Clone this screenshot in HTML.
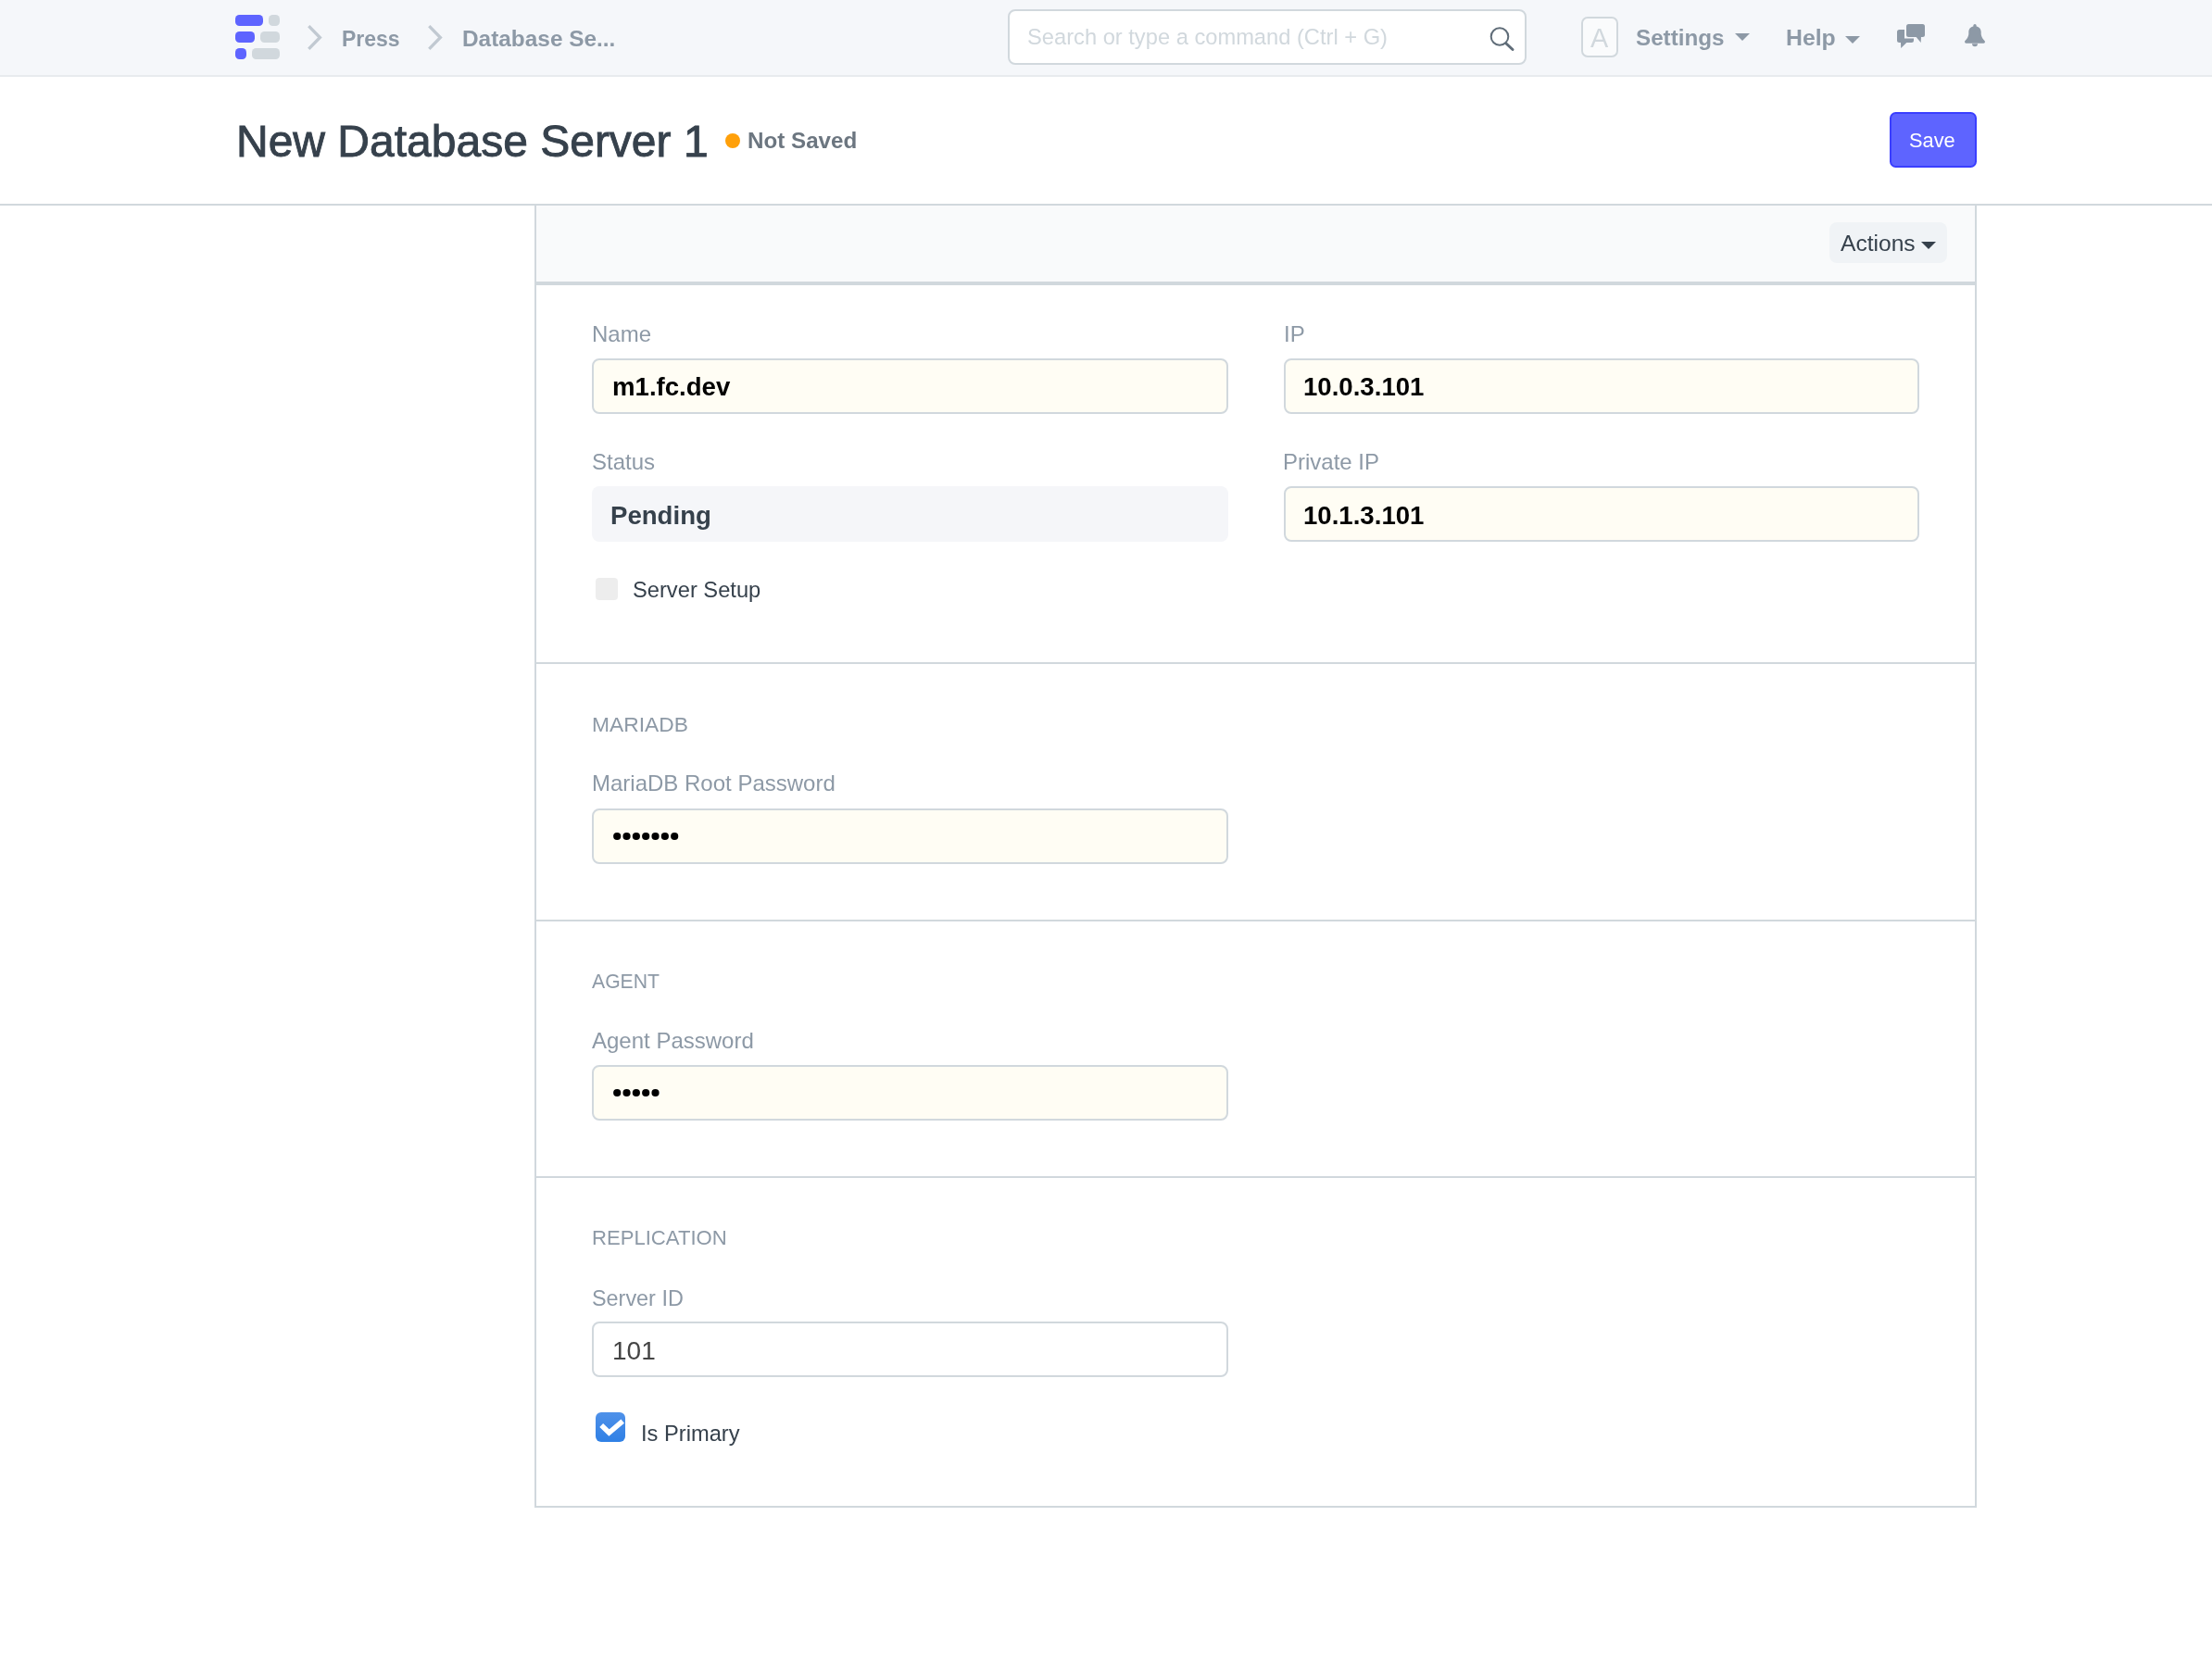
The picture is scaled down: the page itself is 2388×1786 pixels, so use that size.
<!DOCTYPE html>
<html><head><meta charset="utf-8">
<style>
html,body{margin:0;padding:0;}
body{width:2388px;height:1786px;overflow:hidden;position:relative;background:#fff;font-family:"Liberation Sans",sans-serif;}
.a{position:absolute;}
.t{position:absolute;white-space:nowrap;line-height:1;will-change:transform;}
.nav{left:0;top:0;width:2388px;height:81px;background:#f5f7fa;border-bottom:2px solid #e8ebee;}
.lg{position:absolute;height:12px;border-radius:4.5px;}
.pu{background:#5e64ff;}
.gr{background:#d1d8dd;}
.crumb{font-weight:700;color:#8d99a6;font-size:24px;}
.inp{position:absolute;box-sizing:border-box;height:60px;border:2px solid #d1d8dd;border-radius:8px;background:#fffdf4;}
.lbl{color:#8d99a6;font-size:24px;}
.val{color:#000;font-weight:700;font-size:27.6px;}
.sec{color:#8d99a6;font-size:22.8px;}
.hr{position:absolute;left:579px;width:1553px;height:2px;background:#d1d8dd;}
</style></head>
<body>
<!-- NAVBAR -->
<div class="a nav"></div>
<div class="lg pu" style="left:254px;top:16px;width:30px"></div>
<div class="lg gr" style="left:290px;top:16px;width:12px"></div>
<div class="lg pu" style="left:254px;top:34px;width:21px"></div>
<div class="lg gr" style="left:281px;top:34px;width:21px"></div>
<div class="lg pu" style="left:254px;top:52px;width:12px"></div>
<div class="lg gr" style="left:272px;top:52px;width:30px"></div>
<svg class="a" style="left:328px;top:24px" width="24" height="34" viewBox="0 0 24 34"><polyline points="5.3,4.1 17.4,16.5 5.3,28.9" fill="none" stroke="#c1c9d1" stroke-width="3.3"/></svg>
<div class="t crumb" style="left:369px;top:30.5px;font-size:23px">Press</div>
<svg class="a" style="left:457.6px;top:24px" width="24" height="34" viewBox="0 0 24 34"><polyline points="5.3,4.1 17.4,16.5 5.3,28.9" fill="none" stroke="#c1c9d1" stroke-width="3.3"/></svg>
<div class="t crumb" style="left:499px;top:30px;font-size:24.4px">Database Se...</div>

<div class="a" style="left:1088px;top:10px;width:560px;height:60px;box-sizing:border-box;border:2px solid #d1d8dd;border-radius:8px;background:#fff"></div>
<div class="t" style="left:1109px;top:29px;font-size:23.7px;color:#d1d8dd">Search or type a command (Ctrl + G)</div>
<svg class="a" style="left:1600px;top:22px" width="44" height="40" viewBox="0 0 44 40"><circle cx="19" cy="17.5" r="9.3" fill="none" stroke="#5f6c78" stroke-width="2"/><line x1="26" y1="25" x2="33" y2="31.5" stroke="#5f6c78" stroke-width="3" stroke-linecap="round"/></svg>

<div class="a" style="left:1707px;top:18px;width:40px;height:44px;box-sizing:border-box;border:2px solid #d1d8dd;border-radius:7px;background:#fafbfc"></div>
<div class="t" style="left:1717.3px;top:26.8px;font-size:28.8px;color:#d1d8dd">A</div>
<div class="t crumb" style="left:1766px;top:29px;font-size:24.2px">Settings</div>
<svg class="a" style="left:1873px;top:36px" width="16" height="8" viewBox="0 0 16 8"><polygon points="0,0 16,0 8,8" fill="#8d99a6"/></svg>
<div class="t crumb" style="left:1928px;top:29px;font-size:24.8px">Help</div>
<svg class="a" style="left:1992px;top:39px" width="16" height="8" viewBox="0 0 16 8"><polygon points="0,0 16,0 8,8" fill="#8d99a6"/></svg>
<svg class="a" style="left:2040px;top:15px" width="50" height="45" viewBox="0 0 50 45"><path d="M10.5,17 L16,17 L16,26.6 L26,26.6 L26,28.5 Q26,31 23.5,31 L18.3,31 L12.2,37 L12,31 L10.5,31 Q8,31 8,28.5 L8,19.5 Q8,17 10.5,17 Z" fill="#8d99a6"/><rect x="18" y="11" width="20" height="14" rx="2.5" fill="#8d99a6"/><polygon points="27.8,24 34,24 33.7,31" fill="#8d99a6"/></svg>
<svg class="a" style="left:2110px;top:15px" width="45" height="45" viewBox="0 0 45 45"><circle cx="22" cy="12.8" r="1.7" fill="#8d99a6"/><path d="M11,30 C11,29 14.5,27 15.3,22 L15.3,19.5 C15.3,15.5 18.3,13.2 22,13.2 C25.7,13.2 28.7,15.5 28.7,19.5 L28.7,22 C29.5,27 33,29 33,30 Q33,31.7 31.5,31.7 L12.5,31.7 Q11,31.7 11,30 Z" fill="#8d99a6"/><path d="M19,32.3 A3,3 0 0 0 25,32.3 Z" fill="#8d99a6"/></svg>

<!-- PAGE HEAD -->
<div class="t" style="left:254.5px;top:129px;font-size:48px;color:#36414c;-webkit-text-stroke:0.9px #36414c">New Database Server 1</div>
<div class="a" style="left:783px;top:144px;width:16px;height:16px;border-radius:50%;background:#ffa00a"></div>
<div class="t" style="left:807px;top:140px;font-size:24.2px;font-weight:700;color:#6c7680">Not Saved</div>
<div class="a" style="left:2040px;top:121px;width:94px;height:60px;box-sizing:border-box;border:2px solid #3a3eff;border-radius:6.5px;background:#5e64ff"></div>
<div class="t" style="left:2061px;top:141px;font-size:21.8px;color:#fff">Save</div>
<div class="a" style="left:0;top:220px;width:2388px;height:2px;background:#d1d8dd"></div>

<!-- CARD -->
<div class="a" style="left:577px;top:222px;width:1557px;height:1406px;box-sizing:border-box;border:2px solid #d1d8dd;border-top:0;background:#fff"></div>
<div class="a" style="left:579px;top:222px;width:1553px;height:82px;background:#f9fafb;border-bottom:4px solid #d1d8dd"></div>
<div class="a" style="left:1975px;top:240px;width:127px;height:44px;border-radius:8px;background:#f0f3f6"></div>
<div class="t" style="left:1987px;top:251px;font-size:24.6px;color:#36414c">Actions</div>
<svg class="a" style="left:2074px;top:261px" width="16" height="8" viewBox="0 0 16 8"><polygon points="0,0 16,0 8,8" fill="#36414c"/></svg>


<!-- FORM: section 1 -->
<div class="t lbl" style="left:639px;top:348.7px">Name</div>
<div class="inp" style="left:639px;top:387px;width:687px"></div>
<div class="t val" style="left:661px;top:403.6px">m1.fc.dev</div>
<div class="t lbl" style="left:1386px;top:348.7px">IP</div>
<div class="inp" style="left:1386px;top:387px;width:686px"></div>
<div class="t val" style="left:1407px;top:403.6px">10.0.3.101</div>

<div class="t lbl" style="left:639px;top:486.7px">Status</div>
<div class="a" style="left:639px;top:525px;width:687px;height:60px;border-radius:8px;background:#f5f6f9"></div>
<div class="t val" style="left:659px;top:542.6px;color:#36414c">Pending</div>
<div class="t lbl" style="left:1385px;top:486.7px">Private IP</div>
<div class="inp" style="left:1386px;top:525px;width:686px"></div>
<div class="t val" style="left:1407px;top:542.6px">10.1.3.101</div>

<div class="a" style="left:643px;top:624px;width:24px;height:24px;border-radius:4px;background:#ededed"></div>
<div class="t" style="left:683px;top:625.9px;font-size:23.7px;color:#36414c">Server Setup</div>

<div class="hr" style="top:715px"></div>
<div class="t sec" style="left:639px;top:770.7px">MARIADB</div>
<div class="t lbl" style="left:639px;top:834px">MariaDB Root Password</div>
<div class="inp" style="left:639px;top:873px;width:687px"></div>
<svg class="a" style="left:662px;top:898px" width="74" height="10" viewBox="0 0 74 10" fill="#000"><circle cx="4.20" cy="5" r="4.1"/><circle cx="14.53" cy="5" r="4.1"/><circle cx="24.86" cy="5" r="4.1"/><circle cx="35.19" cy="5" r="4.1"/><circle cx="45.52" cy="5" r="4.1"/><circle cx="55.85" cy="5" r="4.1"/><circle cx="66.18" cy="5" r="4.1"/></svg>

<div class="hr" style="top:993px"></div>
<div class="t sec" style="left:639px;top:1049px;font-size:21.2px">AGENT</div>
<div class="t lbl" style="left:639px;top:1111.7px">Agent Password</div>
<div class="inp" style="left:639px;top:1150px;width:687px"></div>
<svg class="a" style="left:662px;top:1175px" width="53" height="10" viewBox="0 0 53 10" fill="#000"><circle cx="4.20" cy="5" r="4.1"/><circle cx="14.53" cy="5" r="4.1"/><circle cx="24.86" cy="5" r="4.1"/><circle cx="35.19" cy="5" r="4.1"/><circle cx="45.52" cy="5" r="4.1"/></svg>

<div class="hr" style="top:1270px"></div>
<div class="t sec" style="left:639px;top:1325.5px;font-size:22.1px">REPLICATION</div>
<div class="t lbl" style="left:639px;top:1390.5px;font-size:23.4px">Server ID</div>
<div class="inp" style="left:639px;top:1427px;width:687px;background:#fff"></div>
<div class="t" style="left:661px;top:1444.9px;font-size:28px;color:#444">101</div>
<div class="a" style="left:643px;top:1525px;width:32px;height:32px;border-radius:6px;background:linear-gradient(#4f91e9,#2f80e5)"></div>
<svg class="a" style="left:643px;top:1525px" width="32" height="32" viewBox="0 0 32 32"><polyline points="6.2,14 14.5,22 29.2,9.6" fill="none" stroke="#fff" stroke-width="5.5"/></svg>
<div class="t" style="left:692px;top:1536.9px;font-size:23.7px;color:#36414c">Is Primary</div>

</body></html>
